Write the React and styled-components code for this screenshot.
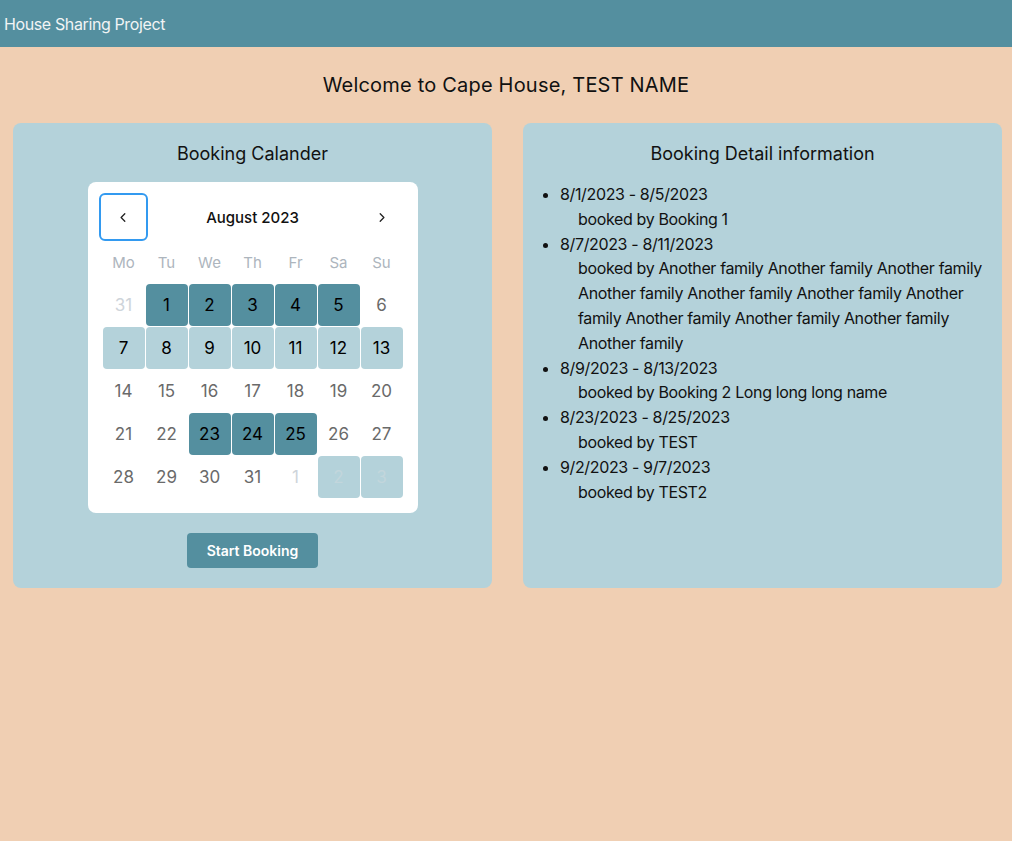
import styled, { createGlobalStyle } from 'styled-components';

const GlobalStyle = createGlobalStyle`
  body {
    margin: 0;
    background: #f0cfb3;
    font-family: Inter, "Noto Sans", "Liberation Sans", sans-serif;
    color: #111;
  }
`;

const bookings = [
  { range: '8/1/2023 - 8/5/2023', who: 'Booking 1' },
  {
    range: '8/7/2023 - 8/11/2023',
    who: Array(11).fill('Another family').join(' '),
  },
  { range: '8/9/2023 - 8/13/2023', who: 'Booking 2 Long long long name' },
  { range: '8/23/2023 - 8/25/2023', who: 'TEST' },
  { range: '9/2/2023 - 9/7/2023', who: 'TEST2' },
];

const weekdays = ['Mo', 'Tu', 'We', 'Th', 'Fr', 'Sa', 'Su'];

// kind: out = other month, dark = booked, light = booked by others, faded = other month + light
const days = [
  { n: 31, kind: 'out' }, { n: 1, kind: 'dark' }, { n: 2, kind: 'dark' }, { n: 3, kind: 'dark' },
  { n: 4, kind: 'dark' }, { n: 5, kind: 'dark' }, { n: 6 },
  { n: 7, kind: 'light' }, { n: 8, kind: 'light' }, { n: 9, kind: 'light' }, { n: 10, kind: 'light' },
  { n: 11, kind: 'light' }, { n: 12, kind: 'light' }, { n: 13, kind: 'light' },
  { n: 14 }, { n: 15 }, { n: 16 }, { n: 17 }, { n: 18 }, { n: 19 }, { n: 20 },
  { n: 21 }, { n: 22 }, { n: 23, kind: 'dark' }, { n: 24, kind: 'dark' }, { n: 25, kind: 'dark' },
  { n: 26 }, { n: 27 },
  { n: 28 }, { n: 29 }, { n: 30 }, { n: 31 }, { n: 1, kind: 'out' }, { n: 2, kind: 'faded' }, { n: 3, kind: 'faded' },
];

const Chevron = ({ dir }) => (
  <svg width="15" height="15" viewBox="0 0 15 15" fill="none">
    <path
      d={dir === 'left' ? 'M8.8 3.8 5.1 7.5l3.7 3.7' : 'M6.2 3.8 9.9 7.5l-3.7 3.7'}
      stroke="#222"
      strokeWidth="1.3"
      strokeLinecap="round"
      strokeLinejoin="round"
    />
  </svg>
);

const App = () => {
  return (
    <>
      <GlobalStyle />
      <Header>House Sharing Project</Header>
      <Welcome>Welcome to Cape House, TEST NAME</Welcome>
      <Panels>
        <Card>
          <CardTitle>Booking Calander</CardTitle>
          <Calendar>
            <MonthRow>
              <NavButton $focused><Chevron dir="left" /></NavButton>
              <MonthLabel>August 2023</MonthLabel>
              <NavButton><Chevron dir="right" /></NavButton>
            </MonthRow>
            <DayGrid>
              {weekdays.map((w) => (
                <Weekday key={w}>{w}</Weekday>
              ))}
              {days.map((d, i) => (
                <Day key={i} $kind={d.kind}>{d.n}</Day>
              ))}
            </DayGrid>
          </Calendar>
          <StartButton>Start Booking</StartButton>
        </Card>
        <Card>
          <CardTitle>Booking Detail information</CardTitle>
          <BookingList>
            {bookings.map((b) => (
              <li key={b.range}>
                {b.range}
                <BookedBy>booked by {b.who}</BookedBy>
              </li>
            ))}
          </BookingList>
        </Card>
      </Panels>
    </>
  );
};

export default App;

const Header = styled.header`
  height: 47px;
  display: flex;
  align-items: center;
  padding-left: 4px;
  background: #548f9f;
  color: #f1f4f5;
  font-size: 16px;
  letter-spacing: -0.38px;
`;

const Welcome = styled.h1`
  margin: 26px 0 26px;
  text-align: center;
  font-size: 20px;
  font-weight: 400;
  line-height: 24px;
  letter-spacing: 0.2px;
`;

const Panels = styled.main`
  display: grid;
  grid-template-columns: 1fr 1fr;
  gap: 31px;
  padding: 0 10px 0 13px;
`;

const Card = styled.section`
  background: #b4d2da;
  border-radius: 8px;
  padding: 20px 15px 20px;
  display: flex;
  flex-direction: column;
  align-items: stretch;
`;

const CardTitle = styled.h2`
  margin: 0 0 18px;
  text-align: center;
  font-size: 18px;
  font-weight: 400;
  line-height: 21px;
`;

const Calendar = styled.div`
  align-self: center;
  width: 330px;
  box-sizing: border-box;
  padding: 11px 11px 15px;
  background: #fff;
  border-radius: 8px;
`;

const MonthRow = styled.div`
  display: flex;
  align-items: center;
  justify-content: space-between;
`;

const NavButton = styled.button`
  width: 49px;
  height: 48px;
  box-sizing: border-box;
  display: flex;
  align-items: center;
  justify-content: center;
  background: #fff;
  border: 2px solid ${(p) => (p.$focused ? '#339af0' : 'transparent')};
  border-radius: 6px;
  padding: 0;
`;

const MonthLabel = styled.span`
  font-size: 15px;
  font-weight: 500;
  color: #111;
`;

const DayGrid = styled.div`
  width: 300px;
  margin: 0 auto;
  display: grid;
  grid-template-columns: repeat(7, 42px);
  grid-auto-rows: 42px;
  gap: 1px;
`;

const Weekday = styled.div`
  display: flex;
  align-items: center;
  justify-content: center;
  font-size: 15px;
  color: #adb5bd;
`;

const dayBg = { dark: '#548f9f', light: '#b4d2da', faded: '#b4d2da' };
const dayColor = { dark: '#000', light: '#000', out: '#ced4da', faded: '#c2d6dc' };

const Day = styled.div`
  display: flex;
  align-items: center;
  justify-content: center;
  border-radius: 4px;
  font-size: 17px;
  background: ${(p) => dayBg[p.$kind] || 'transparent'};
  color: ${(p) => dayColor[p.$kind] || '#6a6a6a'};
`;

const StartButton = styled.button`
  align-self: center;
  margin-top: 20px;
  width: 131px;
  height: 35px;
  border: none;
  border-radius: 4px;
  background: #548f9f;
  color: #fff;
  font-family: inherit;
  font-size: 14px;
  font-weight: 600;
`;

const BookingList = styled.ul`
  margin: 0;
  padding-left: 22px;
  font-size: 16px;
  line-height: 24.8px;
  letter-spacing: -0.36px;
`;

const BookedBy = styled.div`
  padding-left: 18px;
`;
